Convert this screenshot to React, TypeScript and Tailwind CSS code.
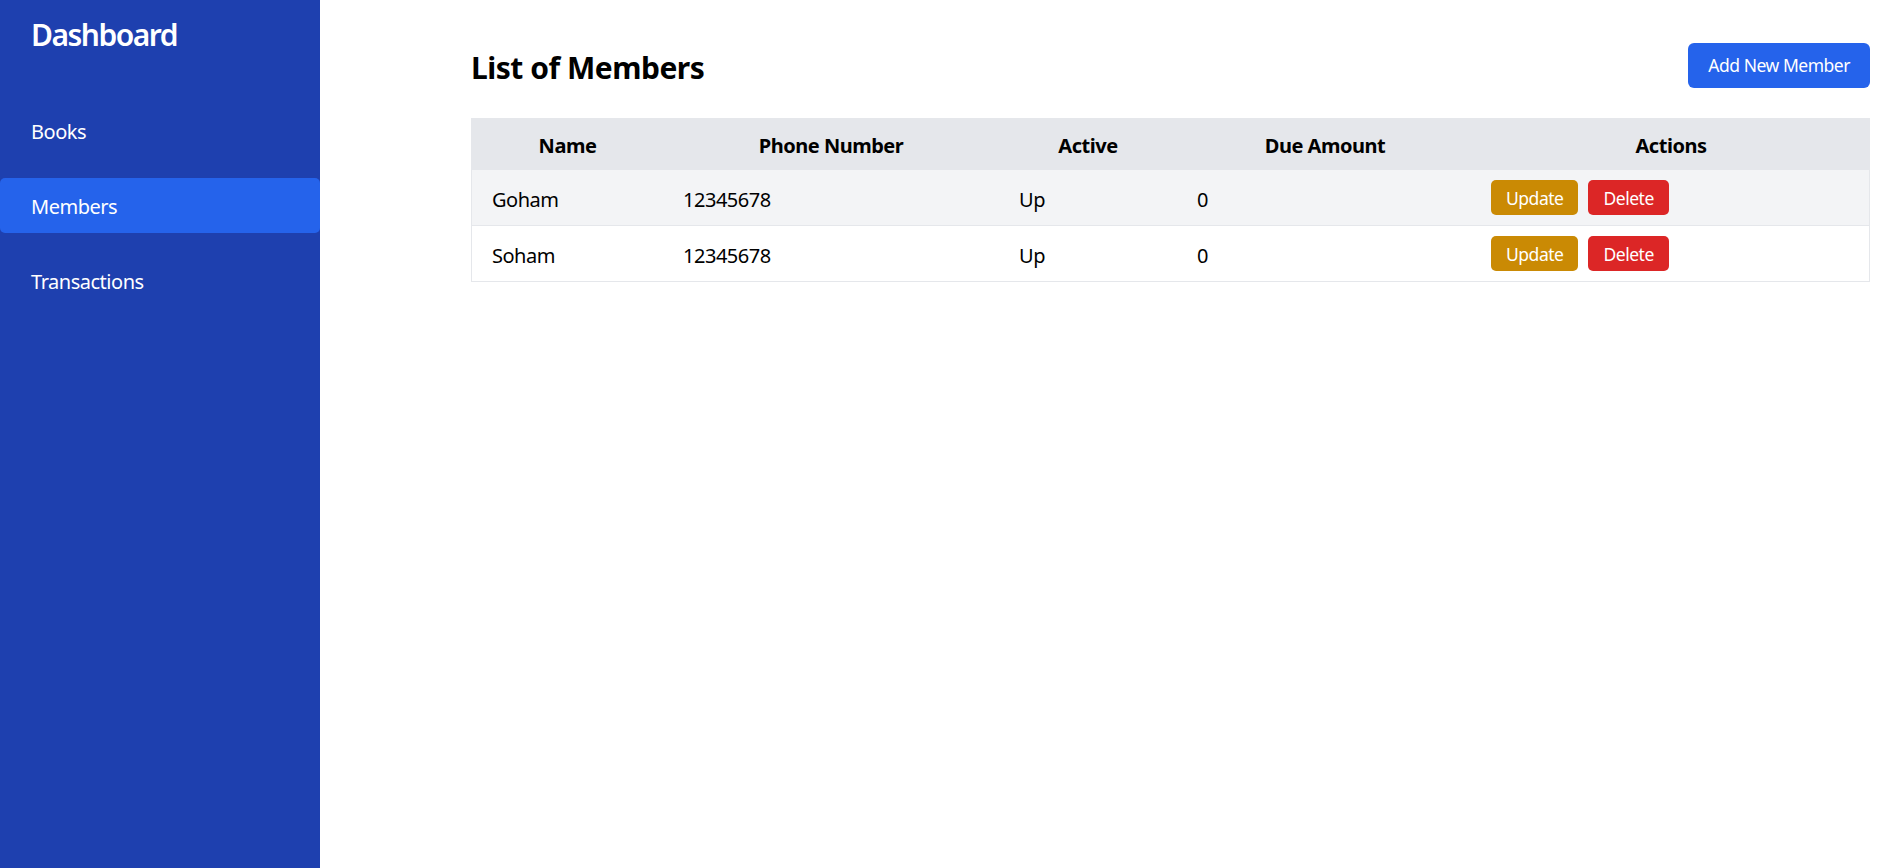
import React from "react";

const members = [
  { name: "Goham", phone: "12345678", active: "Up", due: 0 },
  { name: "Soham", phone: "12345678", active: "Up", due: 0 },
];

const navItems = ["Books", "Members", "Transactions"];

export default function App() {
  return (
    <div
      className="flex min-h-[868px] bg-white tracking-[-0.03em] text-black"
      style={{ fontFamily: '"Noto Sans", "Open Sans", sans-serif' }}
    >
      {/* Sidebar */}
      <aside className="w-[320px] shrink-0 bg-[#1e40af] text-white">
        <h2 className="px-[31px] pt-[12px] text-[30px] font-semibold leading-[45px] tracking-[-0.05em]">Dashboard</h2>
        <ul className="mt-[46px] flex flex-col gap-[20px]">
          {navItems.map((item) => (
            <li
              key={item}
              className={
                item === "Members"
                  ? "rounded-[5px] bg-[#2563eb] px-[31px] pt-[13px] pb-[11px] text-[20px] leading-[31px]"
                  : "rounded-[5px] px-[31px] pt-[13px] pb-[11px] text-[20px] leading-[31px]"
              }
            >
              {item}
            </li>
          ))}
        </ul>
      </aside>

      {/* Main content */}
      <main className="flex-1 pl-[151px] pr-[15px] pt-[43px]">
        <div className="mb-[30px] flex items-center justify-between">
          <h1 className="pt-[5px] text-[30px] font-bold leading-[40px]">List of Members</h1>
          <button className="rounded-[6px] bg-[#2563eb] px-[20px] py-[10px] text-[17.5px] leading-[25px] text-white">
            Add New Member
          </button>
        </div>

        <div className="border border-[#e5e7eb]">
          <table className="w-full table-fixed border-collapse text-[20px]">
            <thead className="bg-[#e5e7eb]">
              <tr>
                <th className="w-[191px] px-[20px] pt-[11px] pb-[9px] text-center font-bold leading-[31px]">Name</th>
                <th className="w-[336px] px-[20px] pt-[11px] pb-[9px] text-center font-bold leading-[31px]">Phone Number</th>
                <th className="w-[178px] px-[20px] pt-[11px] pb-[9px] text-center font-bold leading-[31px]">Active</th>
                <th className="w-[296px] px-[20px] pt-[11px] pb-[9px] text-center font-bold leading-[31px]">Due Amount</th>
                <th className="px-[20px] pt-[11px] pb-[9px] text-center font-bold leading-[31px]">Actions</th>
              </tr>
            </thead>
            <tbody>
              {members.map((m, i) => (
                <tr
                  key={m.name}
                  className={i % 2 === 0 ? "border-b border-[#e5e7eb] bg-[#f3f4f6]" : "bg-white"}
                >
                  <td className="px-[20px] pt-[14px] pb-[10px] leading-[31px]">{m.name}</td>
                  <td className="px-[20px] pt-[14px] pb-[10px] leading-[31px]">{m.phone}</td>
                  <td className="px-[20px] pt-[14px] pb-[10px] leading-[31px]">{m.active}</td>
                  <td className="px-[20px] pt-[14px] pb-[10px] leading-[31px]">{m.due}</td>
                  <td className="px-[18px] py-[10px] leading-[35px]">
                    <div className="flex gap-[10px]">
                      <button className="rounded-[5px] bg-[#ca8a04] px-[15px] pt-[6px] pb-[4px] text-[17.5px] leading-[25px] text-white">
                        Update
                      </button>
                      <button className="rounded-[5px] bg-[#dc2626] px-[15px] pt-[6px] pb-[4px] text-[17.5px] leading-[25px] text-white">
                        Delete
                      </button>
                    </div>
                  </td>
                </tr>
              ))}
            </tbody>
          </table>
        </div>
      </main>
    </div>
  );
}
